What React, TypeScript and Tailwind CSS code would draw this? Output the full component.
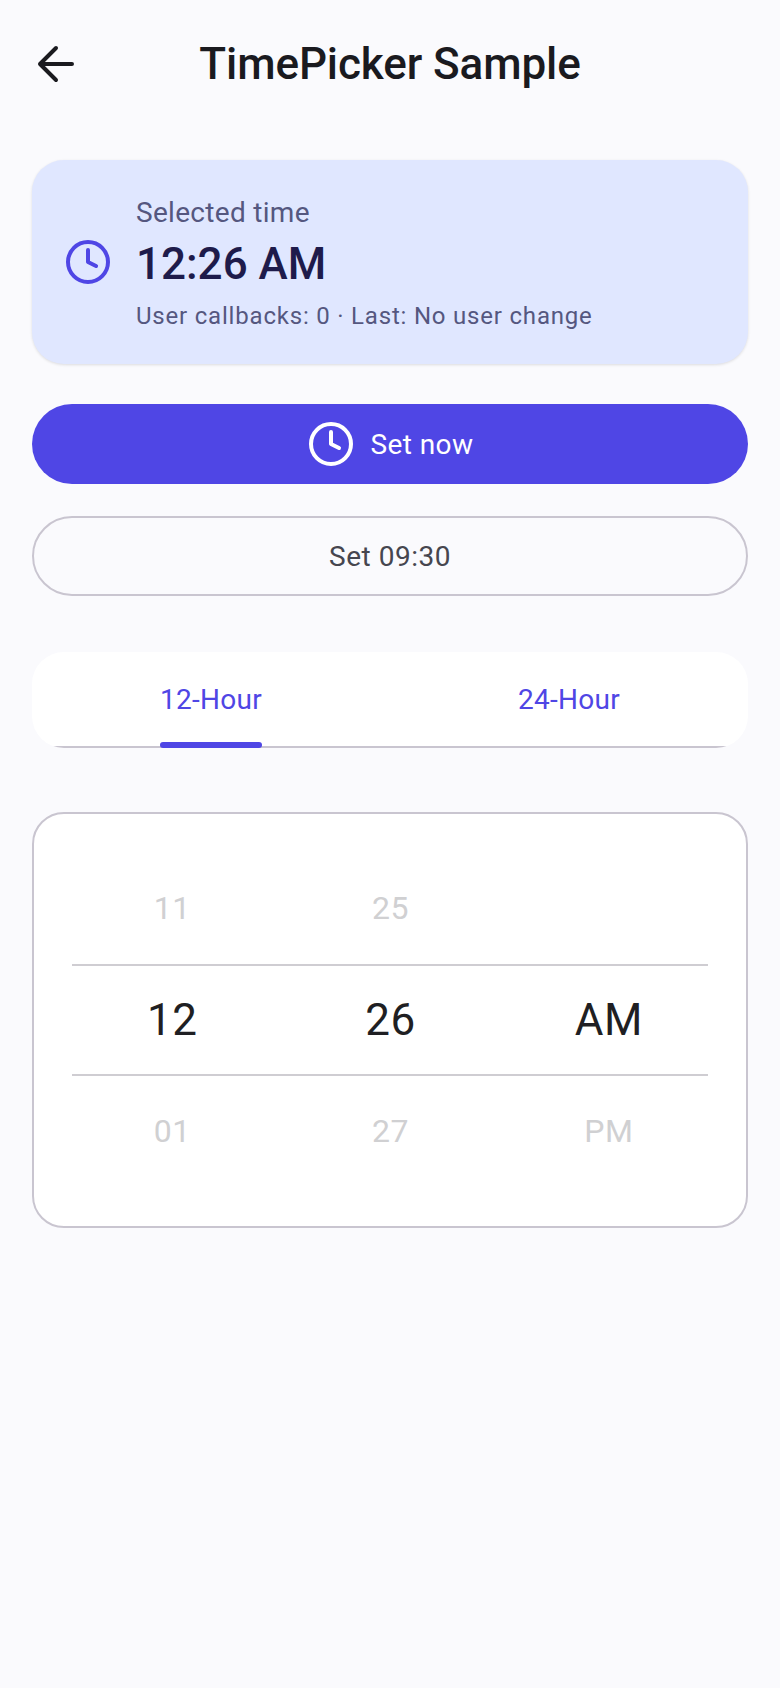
import { Clock } from "lucide-react";

const Row = ({ a, b, c, className }: { a: string; b: string; c: string; className: string }) => (
  <div className={`grid grid-cols-3 items-center text-center text-[32px] text-[#d0d0d2] tracking-[0.5px] ${className}`}>
    <span>{a}</span>
    <span>{b}</span>
    <span>{c}</span>
  </div>
);

export default function App() {
  return (
    <div className="min-h-[1688px] bg-[#fafafd] font-['Roboto',sans-serif] px-8">
      <header className="relative h-[128px] flex items-center justify-center">
        <svg viewBox="0 0 24 24" fill="none" stroke="#1a1a1f" strokeWidth="2" className="absolute left-0 top-[40px] w-[48px] h-[48px]">
          <path d="M20 12H4M12 4l-8 8 8 8" strokeLinecap="round" strokeLinejoin="round" />
        </svg>
        <h1 className="text-[44px] font-medium text-[#1a1a1f] leading-none tracking-[-0.1px]">TimePicker Sample</h1>
      </header>

      <section className="mt-8 h-[204px] rounded-[32px] bg-[#e0e7ff] shadow-[0_1px_3px_rgba(0,0,0,0.12)] flex items-center pl-8 gap-6">
        <Clock size={48} strokeWidth={2} className="text-[#4f46e5] shrink-0" />
        <div className="flex flex-col mt-[4px]">
          <span className="text-[28px] leading-[38px] text-[#55577f] tracking-[0.3px]">Selected time</span>
          <span className="text-[44px] leading-[64px] font-medium text-[#1e1b4b]">12:26 AM</span>
          <span className="text-[24px] leading-[36px] mt-[2px] text-[#55577f] tracking-[0.8px]">User callbacks: 0 · Last: No user change</span>
        </div>
      </section>

      <button className="mt-10 w-full h-[80px] rounded-full bg-[#4f46e5] text-white text-[28px] tracking-[0.4px] flex items-center justify-center gap-4">
        <Clock size={48} strokeWidth={2} />
        <span className="mt-[2px]">Set now</span>
      </button>

      <button className="mt-8 w-full h-[80px] rounded-full border-2 border-[#c9c5d0] text-[#46464f] text-[28px] tracking-[0.5px] flex items-center justify-center">
        <span className="mt-[2px]">Set 09:30</span>
      </button>

      <nav className="mt-[56px] h-[96px] rounded-[32px] bg-white overflow-hidden flex flex-col text-[#4f46e5] text-[28px] tracking-[0.3px]">
        <div className="grid grid-cols-2 flex-1">
          <div className="flex justify-center">
            <div className="relative h-full flex items-center pt-[2px]">
              12-Hour
              <div className="absolute bottom-[-2px] left-0 right-0 h-[6px] rounded-full bg-[#4f46e5]" />
            </div>
          </div>
          <div className="flex items-center justify-center pt-[2px]">24-Hour</div>
        </div>
        <div className="h-[2px] bg-[#c9c5d0]" />
      </nav>

      <section className="mt-[64px] h-[416px] rounded-[32px] bg-white border-2 border-[#c9c5d0] pt-[40px] pl-[29px] pr-[28px] flex flex-col">
        <Row a="11" b="25" c="" className="h-[110px] pb-[2px]" />
        <div className="ml-[9px] mr-[10px] border-y-2 border-[#cfcdd2]">
          <div className="-ml-[9px] -mr-[10px] grid grid-cols-3 h-[108px] items-center text-center text-[44px] text-[#1f1f23] tracking-[0.5px]">
            <span>12</span>
            <span>26</span>
            <span>AM</span>
          </div>
        </div>
        <Row a="01" b="27" c="PM" className="h-[110px]" />
      </section>
    </div>
  );
}
